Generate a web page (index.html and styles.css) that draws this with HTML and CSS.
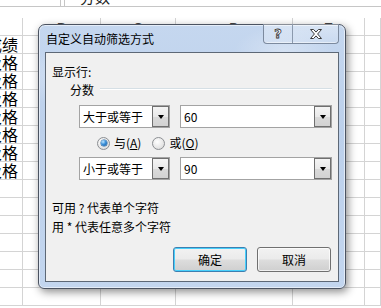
FILE: index.html
```html
<!DOCTYPE html>
<html lang="zh-CN">
<head>
<meta charset="utf-8">
<title>自定义自动筛选方式</title>
<link rel="stylesheet" href="styles.css">
</head>
<body>
<div class="top">
  <div class="namebox"></div>
  <div class="fbar"><span class="fbar-text">分数</span></div>
</div>
<div class="sheet">
  <div class="c"></div><div class="c h">B</div><div class="c h">C</div><div class="c h">D</div><div class="c h">E</div><div class="c"></div>
  <div class="c t">成绩</div><div class="c"></div><div class="c"></div><div class="c"></div><div class="c"></div><div class="c"></div>
  <div class="c t">及格</div><div class="c"></div><div class="c"></div><div class="c"></div><div class="c"></div><div class="c"></div>
  <div class="c t">及格</div><div class="c"></div><div class="c"></div><div class="c"></div><div class="c"></div><div class="c"></div>
  <div class="c t">及格</div><div class="c"></div><div class="c"></div><div class="c"></div><div class="c"></div><div class="c"></div>
  <div class="c t">及格</div><div class="c"></div><div class="c"></div><div class="c"></div><div class="c"></div><div class="c"></div>
  <div class="c t">及格</div><div class="c"></div><div class="c"></div><div class="c"></div><div class="c"></div><div class="c"></div>
  <div class="c t">及格</div><div class="c"></div><div class="c"></div><div class="c"></div><div class="c"></div><div class="c"></div>
  <div class="c t">及格</div><div class="c"></div><div class="c"></div><div class="c"></div><div class="c"></div><div class="c"></div>
  <div class="c"></div><div class="c"></div><div class="c"></div><div class="c"></div><div class="c"></div><div class="c"></div>
  <div class="c"></div><div class="c"></div><div class="c"></div><div class="c"></div><div class="c"></div><div class="c"></div>
  <div class="c"></div><div class="c"></div><div class="c"></div><div class="c"></div><div class="c"></div><div class="c"></div>
  <div class="c"></div><div class="c"></div><div class="c"></div><div class="c"></div><div class="c"></div><div class="c"></div>
  <div class="c"></div><div class="c"></div><div class="c"></div><div class="c"></div><div class="c"></div><div class="c"></div>
  <div class="c"></div><div class="c"></div><div class="c"></div><div class="c"></div><div class="c"></div><div class="c"></div>
  <div class="c"></div><div class="c"></div><div class="c"></div><div class="c"></div><div class="c"></div><div class="c"></div>
</div>

<div class="dialog">
  <div class="titlebar">
    <div class="title">自定义自动筛选方式</div>
    <div class="caps">
      <div class="cap help"><span class="q">?</span></div>
      <div class="cap close">
        <svg width="12" height="10" viewBox="0 0 12 10"><path d="M0.5 0.5H3.6L6 3.1L8.4 0.5H11.5L7.6 5L11.5 9.5H8.4L6 6.9L3.6 9.5H0.5L4.4 5Z" fill="#fff" stroke="#3a3a3a" stroke-width="1" stroke-linejoin="round"/></svg>
      </div>
    </div>
  </div>
  <div class="client">
    <div class="show">显示行:</div>
    <div class="group"><span class="group-label">分数</span><span class="group-line"></span></div>
    <div class="crow">
      <div class="combo op"><span class="val">大于或等于</span><span class="dd"><i class="tri"></i></span></div>
      <div class="combo num"><span class="val">60</span><span class="dd"><i class="tri"></i></span></div>
    </div>
    <div class="radios">
      <span class="radio on"></span><span class="rlabel">与(<u>A</u>)</span>
      <span class="radio"></span><span class="rlabel">或(<u>O</u>)</span>
    </div>
    <div class="crow second">
      <div class="combo op"><span class="val">小于或等于</span><span class="dd"><i class="tri"></i></span></div>
      <div class="combo num"><span class="val">90</span><span class="dd"><i class="tri"></i></span></div>
    </div>
    <div class="hint first">可用 ? 代表单个字符</div>
    <div class="hint">用 * 代表任意多个字符</div>
    <div class="buttons">
      <div class="btn default">确定</div>
      <div class="btn">取消</div>
    </div>
  </div>
</div>
</body>
</html>
```
FILE: styles.css
```css
html, body {
  margin: 0;
  padding: 0;
}
body {
  width: 381px;
  height: 308px;
  overflow: hidden;
  background: #fff;
  font-family: "Noto Sans CJK SC", "Noto Sans", sans-serif;
  color: #000;
  position: relative;
}

/* spreadsheet background */
.top {
  display: flex;
  height: 7px;
  border-bottom: 1px solid #c6c6c6;
  box-sizing: border-box;
}
.namebox {
  width: 61px;
  border-right: 1px solid #c6c6c6;
  box-sizing: border-box;
}
.fbar {
  flex: 1;
  margin-left: 3px;
  border-left: 1px solid #c6c6c6;
  overflow: hidden;
  position: relative;
}
.fbar-text {
  display: block;
  font-size: 15px;
  line-height: 15px;
  margin-top: -11px;
  padding-left: 15px;
  color: #222;
}
.sheet {
  margin-top: 11px;
  display: grid;
  grid-template-columns: 23px 78px 75px 117px 72px 16px;
  grid-auto-rows: 18px;
}
.c {
  border-right: 1px solid #d4d4d4;
  border-bottom: 1px solid #d4d4d4;
  box-sizing: border-box;
  overflow: hidden;
  white-space: nowrap;
}
.h {
  text-align: center;
  font-family: "Liberation Sans", sans-serif;
  font-size: 14px;
  line-height: 21px;
  color: #444;
}
.t {
  font-size: 16px;
  line-height: 17px;
  direction: rtl;
  text-align: right;
  padding-right: 4px;
}

/* dialog window */
.dialog {
  position: absolute;
  left: 38px;
  top: 24px;
  width: 308px;
  height: 265px;
  box-sizing: border-box;
  border: 1px solid #4b5361;
  border-radius: 7px 7px 6px 6px;
  background:
    radial-gradient(ellipse 60px 30px at 12% 20%, rgba(255,255,255,.35), rgba(255,255,255,0)),
    radial-gradient(ellipse 50px 25px at 80% 10%, rgba(255,255,255,.3), rgba(255,255,255,0)),
    linear-gradient(to bottom, #c5d7ef 0%, #bcd0eb 40%, #c3d6ef 100%);
  box-shadow: 2px 3px 8px rgba(0,0,0,.45), inset 0 0 0 1px rgba(255,255,255,.55);
  padding: 0 6px 6px 6px;
  display: flex;
  flex-direction: column;
}
.titlebar {
  height: 27px;
  display: flex;
  align-items: flex-start;
  flex: none;
}
.title {
  padding-top: 7px;
  padding-left: 1px;
  font-size: 12px;
  line-height: 14px;
  color: #000;
}
.caps {
  margin-left: auto;
  margin-top: -1px;
  display: flex;
  height: 19px;
  border: 1px solid #7c8a9e;
  border-top: none;
  border-radius: 0 0 4px 4px;
  background: linear-gradient(to bottom, rgba(255,255,255,.35), rgba(255,255,255,.1));
  box-shadow: inset 0 -1px 0 rgba(255,255,255,.5);
}
.cap {
  display: flex;
  align-items: center;
  justify-content: center;
}
.help {
  width: 28px;
  border-right: 1px solid #8b99ad;
}
.close {
  width: 45px;
}
.q {
  font-family: "DejaVu Sans", sans-serif;
  font-weight: bold;
  font-size: 13px;
  line-height: 13px;
  color: #fff;
  -webkit-text-stroke: 0.8px #333;
}

.client {
  flex: 1;
  background: #f0f0f0;
  border: 1px solid #5d6876;
  display: flex;
  flex-direction: column;
  font-size: 12px;
  line-height: 14px;
}
.show {
  margin-top: 12px;
  margin-left: 6px;
}
.group {
  margin-top: 4px;
  margin-left: 24px;
  display: flex;
  align-items: center;
}
.group-label {
  line-height: 14px;
}
.group-line {
  flex: 1;
  margin-left: 6px;
  margin-right: 6px;
  margin-top: -3px;
  border-top: 1px solid #d5dfe5;
  border-bottom: 1px solid #fff;
}
.crow {
  margin-top: 8px;
  margin-left: 33px;
  display: flex;
  gap: 10px;
}
.crow.second {
  margin-top: 7px;
}
.combo {
  height: 23px;
  box-sizing: border-box;
  border: 1px solid #a3a3a3;
  background: #fff;
  display: flex;
  align-items: stretch;
}
.op {
  width: 91px;
}
.num {
  width: 152px;
}
.val {
  flex: 1;
  padding-left: 3px;
  line-height: 21px;
  font-size: 12px;
}
.dd {
  width: 17px;
  box-sizing: border-box;
  border: 1px solid #6f6f6f;
  background: linear-gradient(to bottom, #f4f4f4 0%, #e9e9e9 50%, #dadada 51%, #d2d2d2 100%);
  display: flex;
  align-items: center;
  justify-content: center;
}
.tri {
  width: 0;
  height: 0;
  border-left: 3.5px solid transparent;
  border-right: 3.5px solid transparent;
  border-top: 4px solid #000;
}
.radios {
  margin-top: 8px;
  margin-left: 51px;
  display: flex;
  align-items: center;
  height: 14px;
}
.radio {
  width: 13px;
  height: 13px;
  box-sizing: border-box;
  border-radius: 50%;
  border: 1px solid #8c8f93;
  background: radial-gradient(circle at 40% 35%, #ffffff 0%, #e6e6e6 60%, #cfcfcf 100%);
  position: relative;
  flex: none;
}
.radio.on::after {
  content: "";
  position: absolute;
  left: 2.5px;
  top: 2.5px;
  width: 6px;
  height: 6px;
  border-radius: 50%;
  background: radial-gradient(circle at 35% 30%, #bfe6ff 0%, #3a8fd8 45%, #14589e 100%);
  box-shadow: 0 0 0 0.5px #215f9a;
}
.rlabel {
  margin-left: 4px;
  margin-right: 11px;
}
.rlabel u {
  text-decoration-thickness: 1px;
  text-underline-offset: 1px;
}
.hint {
  margin-left: 6px;
  margin-top: 5px;
}
.hint.first {
  margin-top: 21px;
}
.buttons {
  margin-top: 13px;
  display: flex;
  justify-content: flex-end;
  gap: 10px;
  padding-right: 7px;
}
.btn {
  width: 74px;
  height: 25px;
  box-sizing: border-box;
  border: 1px solid #707070;
  border-radius: 3px;
  background: linear-gradient(to bottom, #f2f2f2 0%, #ebebeb 48%, #dddddd 52%, #cfcfcf 100%);
  box-shadow: inset 0 0 0 1px rgba(255,255,255,.7);
  text-align: center;
  line-height: 23px;
  font-size: 12px;
}
.btn.default {
  border-color: #3c7fb1;
  box-shadow: inset 0 0 0 1px #48d0fb;
}
```
